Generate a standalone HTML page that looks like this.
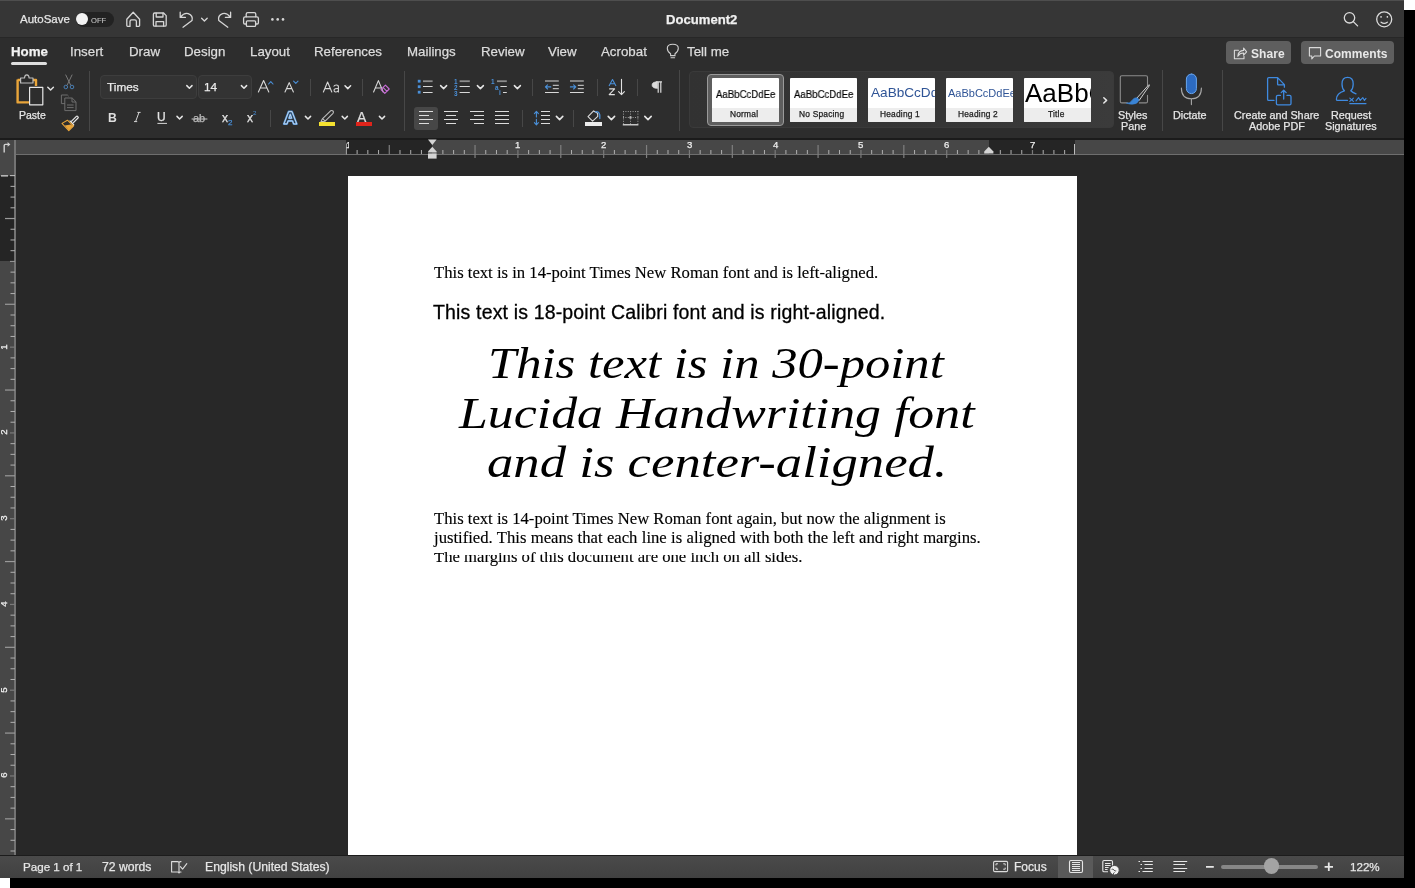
<!DOCTYPE html>
<html><head><meta charset="utf-8">
<style>
*{margin:0;padding:0;box-sizing:border-box}
html,body{width:1415px;height:888px;overflow:hidden;background:#000}
.t{will-change:transform}
body{position:relative;font-family:"Liberation Sans",sans-serif;color:#e3e3e3}
.a{position:absolute}
.t{position:absolute;white-space:pre;line-height:1;-webkit-text-stroke:.25px currentColor}
#page .t{-webkit-text-stroke:.15px currentColor}
svg{position:absolute;overflow:visible}
</style></head><body>
<!-- corners -->
<div class="a" style="left:1404px;top:0;width:11px;height:10px;background:#fff"></div>
<div class="a" style="left:0;top:878px;width:10px;height:10px;background:#fff"></div>

<!-- title bar -->
<div class="a" id="titlebar" style="left:0;top:0;width:1404px;height:37px;background:#363636;border-top:1px solid #4e4e4e"></div>
<!-- ribbon -->
<div class="a" id="ribbon" style="left:0;top:37px;width:1404px;height:101px;background:#2d2d2d;border-top:1px solid #272727"></div>
<div class="a" style="left:0;top:138px;width:1404px;height:2px;background:#1b1b1b"></div>
<!-- canvas -->
<div class="a" id="canvas" style="left:0;top:140px;width:1404px;height:716px;background:#282828"></div>

<!-- horizontal ruler -->
<div class="a" style="left:15px;top:140px;width:1389px;height:15px;background:#474747"></div>
<div class="a" style="left:346px;top:140px;width:86px;height:15px;background:#252525"></div>
<div class="a" style="left:989px;top:140px;width:86px;height:15px;background:#252525"></div>
<div class="a" style="left:15px;top:154px;width:1389px;height:1.4px;background:#6e6e6e"></div>
<!-- vertical ruler -->
<div class="a" style="left:0;top:140px;width:15px;height:716px;background:#474747"></div>
<div class="a" style="left:0;top:176px;width:15px;height:85px;background:#252525"></div>
<div class="a" style="left:14.2px;top:140px;width:1.5px;height:716px;background:#737373"></div>

<!-- page -->
<div class="a" id="page" style="left:348px;top:176px;width:729px;height:680px;background:#fff;overflow:hidden;color:#000">
<div class="t" style="left:85.6px;top:88.5px;font-family:'Liberation Serif',serif;font-size:16.67px">This text is in 14-point Times New Roman font and is left-aligned.</div>
<div class="t" id="cal" style="left:85px;top:127.1px;font-family:'Liberation Sans',sans-serif;font-size:19.5px;letter-spacing:.16px;-webkit-text-stroke:.3px #000">This text is 18-point Calibri font and is right-aligned.</div>
<div class="t" id="luc1" style="left:140px;top:166.15px;font-family:'Liberation Serif',serif;font-style:italic;font-size:44px;-webkit-text-stroke:0;transform-origin:0 0;transform:scaleX(1.1509)">This text is in 30-point</div>
<div class="t" id="luc2" style="left:111px;top:216.15px;font-family:'Liberation Serif',serif;font-style:italic;font-size:44px;-webkit-text-stroke:0;transform-origin:0 0;transform:scaleX(1.1782)">Lucida Handwriting font</div>
<div class="t" id="luc3" style="left:139px;top:265.15px;font-family:'Liberation Serif',serif;font-style:italic;font-size:44px;-webkit-text-stroke:0;transform-origin:0 0;transform:scaleX(1.1982)">and is center-aligned.</div>
<div class="t" id="p4a" style="left:85.6px;top:335px;font-family:'Liberation Serif',serif;font-size:16.67px">This text is 14-point Times New Roman font again, but now the alignment is</div>
<div class="t" id="p4b" style="left:85.6px;top:354.3px;word-spacing:.17px;font-family:'Liberation Serif',serif;font-size:16.67px">justified. This means that each line is aligned with both the left and right margins.</div>
<div class="a" style="left:80px;top:364px;width:600px;height:15px;overflow:hidden"><div class="t" style="left:5.6px;top:11px;font-family:'Liberation Serif',serif;font-size:16.67px">The margins of this document are one inch on all sides.</div></div>
<div class="a" style="left:80px;top:379px;width:600px;height:20px;overflow:hidden"><div class="t" style="left:5.6px;top:-6px;font-family:'Liberation Serif',serif;font-size:16.67px">The margins of this document are one inch on all sides.</div></div>
</div>

<!-- status bar -->
<div class="a" style="left:0;top:855px;width:1404px;height:1px;background:#1c1c1c"></div>
<div class="a" id="status" style="left:0;top:856px;width:1404px;height:22px;background:linear-gradient(#4a4a4a,#414141)"></div>
<!-- title content -->
<div class="t" style="left:20px;top:14px;font-size:11.5px;color:#e6e6e6">AutoSave</div>
<div class="a" style="left:76px;top:12px;width:38px;height:15px;border-radius:7.5px;background:#222"></div>
<div class="a" style="left:75.9px;top:13.2px;width:11.8px;height:11.8px;border-radius:50%;background:#f2f2f2"></div>
<div class="t" style="left:90.6px;top:17px;font-size:7.6px;color:#c4c4c4;-webkit-text-stroke:.1px currentColor">OFF</div>
<svg style="left:0;top:0" width="300" height="37" fill="none" stroke="#d6d6d6" stroke-width="1.3" stroke-linejoin="round" stroke-linecap="round">
 <path d="M126.8 19.2 L133.2 12.2 L139.6 19.2 V25.6 Q139.6 26.4 138.8 26.4 H136.4 V21.4 Q136.4 19.8 134.8 19.8 H131.6 Q130 19.8 130 21.4 V26.4 H127.6 Q126.8 26.4 126.8 25.6 Z"/>
 <path d="M153.4 14.2 Q153.4 13 154.6 13 H163.6 L166.2 15.6 V25 Q166.2 26.2 165 26.2 H154.6 Q153.4 26.2 153.4 25 Z"/>
 <path d="M156.2 13.2 V17 H163 V13.2"/>
 <path d="M156 26 V21.6 H163.6 V26"/>
 <path d="M180.2 12.2 V17.4 H185.4 M180.6 17 Q184 12.5 188.2 13.6 Q193.4 15.6 192 20.6 L183 27.2"/>
 <path d="M201.6 18.2 L204.4 21 L207.2 18.2"/>
 <path d="M230.6 12.2 V17.4 H225.4 M230.2 17 Q226.8 12.5 222.6 13.6 Q217.4 15.6 218.8 20.6 L227.8 27.2"/>
 <path d="M246.2 16.8 V14.2 Q246.2 12.6 247.8 12.6 H254.2 Q255.8 12.6 255.8 14.2 V16.8"/>
 <path d="M246 24 H244.8 Q243.6 24 243.6 22.8 V18.4 Q243.6 16.8 245.2 16.8 H256.8 Q258.4 16.8 258.4 18.4 V22.8 Q258.4 24 257.2 24 H256"/>
 <rect x="246.4" y="20.8" width="9.2" height="5.6" rx="1"/>
</svg>
<svg style="left:0;top:0" width="300" height="37" fill="#d6d6d6"><circle cx="272.4" cy="19.4" r="1.3"/><circle cx="277.7" cy="19.4" r="1.3"/><circle cx="283" cy="19.4" r="1.3"/></svg>
<div class="t" style="left:665.5px;top:13.4px;font-size:13.1px;font-weight:bold;color:#f0f0f0">Document2</div>
<svg style="left:0;top:0" width="1404" height="37" fill="none" stroke="#dcdcdc" stroke-width="1.3" stroke-linecap="round">
 <circle cx="1349.5" cy="17.8" r="5.2"/><path d="M1353.3 21.6 L1357.6 25.9"/>
 <circle cx="1384.2" cy="19.3" r="7.5"/><path d="M1381.1 22.2 Q1384.2 24.4 1387.3 22.2"/>
</svg>
<svg style="left:0;top:0" width="1404" height="37" fill="#dcdcdc"><rect x="1380.3" y="16.1" width="1.5" height="1.6" rx=".4"/><rect x="1386.6" y="16.1" width="1.5" height="1.6" rx=".4"/></svg>

<!-- tabs -->
<div class="t" style="left:10.5px;top:44.7px;font-size:13.3px;font-weight:bold;color:#f2f2f2">Home</div>
<div class="a" style="left:10.8px;top:61.5px;width:36.5px;height:3px;border-radius:1.5px;background:#dedede"></div>
<div class="t" style="left:70.3px;top:44.7px;font-size:13.3px;color:#dcdcdc">Insert</div>
<div class="t" style="left:129.3px;top:44.7px;font-size:13.3px;color:#dcdcdc">Draw</div>
<div class="t" style="left:184px;top:44.7px;font-size:13.3px;color:#dcdcdc">Design</div>
<div class="t" style="left:249.5px;top:44.7px;font-size:13.3px;color:#dcdcdc">Layout</div>
<div class="t" style="left:314.3px;top:44.7px;font-size:13.3px;color:#dcdcdc">References</div>
<div class="t" style="left:407.2px;top:44.7px;font-size:13.3px;color:#dcdcdc">Mailings</div>
<div class="t" style="left:481.2px;top:44.7px;font-size:13.3px;color:#dcdcdc">Review</div>
<div class="t" style="left:547.5px;top:44.7px;font-size:13.3px;color:#dcdcdc">View</div>
<div class="t" style="left:601.2px;top:44.7px;font-size:13.3px;color:#dcdcdc">Acrobat</div>
<svg style="left:0;top:0" width="740" height="70" fill="none" stroke="#cfcfcf" stroke-width="1.1" stroke-linecap="round">
 <path d="M670.6 55.6 V53.8 Q667.3 51.6 667.3 48.2 Q667.3 44.2 672.8 44.2 Q678.3 44.2 678.3 48.2 Q678.3 51.6 675 53.8 V55.6 Z"/><path d="M671 57.8 H674.6"/>
</svg>
<div class="t" style="left:686.8px;top:44.7px;font-size:13.3px;color:#dcdcdc">Tell me</div>

<!-- ribbon content -->
<!-- share/comments -->
<div class="a" style="left:1226px;top:41px;width:64.5px;height:23.3px;border-radius:4px;background:#5e5e5e"></div>
<div class="a" style="left:1300.5px;top:41px;width:93.5px;height:23.3px;border-radius:4px;background:#5e5e5e"></div>
<svg style="left:0;top:0" width="1404" height="70" fill="none" stroke="#dadada" stroke-width="1.1" stroke-linejoin="round" stroke-linecap="round">
 <path d="M1238.5 50.2 H1234.4 V58.8 H1244 V56.4"/>
 <path d="M1237.8 56.2 Q1238.4 50.6 1243.6 50.4 V48 L1246.6 51.8 L1243.6 55.2 V53 Q1240 52.8 1237.8 56.2 Z"/>
 <path d="M1309.4 47.6 H1320.6 V56 H1314.4 L1311.8 58.8 V56 H1309.4 Z"/>
</svg>
<div class="t" style="left:1250.8px;top:48.1px;font-size:12px;font-weight:bold;color:#e8e8e8;-webkit-text-stroke:0;letter-spacing:.1px">Share</div>
<div class="t" style="left:1325.3px;top:48.1px;font-size:12px;font-weight:bold;color:#e8e8e8;-webkit-text-stroke:0;letter-spacing:.05px">Comments</div>

<!-- paste group -->
<svg style="left:0;top:0" width="100" height="140" fill="none" stroke-linejoin="round">
 <path d="M17.6 80 H22 M31 80 H36 V86" stroke="#e9a53a" stroke-width="2.4"/>
 <path d="M17.6 79.5 V102.4 H29" stroke="#e9a53a" stroke-width="2.4"/>
 <path d="M20.6 83 V78 H24.5 Q24.6 74.8 26.8 74.8 Q29 74.8 29.1 78 H33 V83 Z" stroke="#bdbdbd" stroke-width="1.2" fill="#2b2b2b"/>
 <rect x="29.6" y="87.4" width="13.2" height="17.4" stroke="#e6e6e6" stroke-width="1.2"/>
 <path d="M47.8 87.2 L50.6 90 L53.4 87.2" stroke="#e0e0e0" stroke-width="1.5" stroke-linecap="round" stroke-linejoin="round"/>
 <!-- scissors -->
 <path d="M65.6 74.6 L70.8 85.4 M72.2 74.6 L67 85.4" stroke="#7a7a7a" stroke-width="1"/>
 <circle cx="65.8" cy="87" r="1.8" stroke="#4a7fb4" stroke-width="1"/><circle cx="72" cy="87" r="1.8" stroke="#4a7fb4" stroke-width="1"/>
 <!-- copy -->
 <path d="M65 103.6 H61.4 V95 H67.4 L68.6 96.2" stroke="#6e6e6e" stroke-width="1"/>
 <path d="M64.8 98 H72.2 L76 101.8 V110.6 H64.8 Z M72 98 V102 H76 M67 105 H73.6 M67 107.6 H73.6" stroke="#6e6e6e" stroke-width="1"/>
 <!-- format painter -->
 <path d="M70.6 122.2 L76.4 116.4 Q77 115.8 77.6 116.4 L78 116.8 Q78.6 117.4 78 118 L72.2 123.8" stroke="#e6e6e6" stroke-width="1.2"/>
 <path d="M69.6 120.6 L73.8 124.8 L71.6 127" stroke="#e6e6e6" stroke-width="1.2"/>
 <path d="M62 123.4 L67.4 120.2 L73.4 126 L68.8 130.6 Z" stroke="#e9a53a" stroke-width="1.1" fill="none"/>
 <path d="M64.8 125.6 L70.8 124.6 L73 126.2 L68.8 130.4 Z" fill="#e9a53a" stroke="none"/>
</svg>
<div class="t" style="left:19.3px;top:109.9px;font-size:10.5px;color:#e6e6e6">Paste</div>
<div class="a" style="left:89px;top:71px;width:1px;height:60px;background:#474747"></div>

<!-- font group -->
<div class="a" style="left:100px;top:75px;width:96.5px;height:24px;border-radius:4px;background:#333;border:1px solid #3d3d3d"></div>
<div class="a" style="left:198px;top:75px;width:54px;height:24px;border-radius:4px;background:#333;border:1px solid #3d3d3d"></div>
<div class="t" style="left:107px;top:81.7px;font-size:11.8px;color:#eaeaea">Times</div>
<div class="t" style="left:204.3px;top:81.7px;font-size:11.8px;color:#eaeaea">14</div>
<svg style="left:0;top:0" width="420" height="140" fill="none" stroke="#d8d8d8" stroke-width="1.2" stroke-linecap="round" stroke-linejoin="round">
 <path d="M186.8 85.6 L189.4 88.2 L192 85.6" stroke="#e6e6e6" stroke-width="1.5"/>
 <path d="M241.4 85.6 L244 88.2 L246.6 85.6" stroke="#e6e6e6" stroke-width="1.5"/>
 <!-- grow A -->
 <path d="M258.4 92 L263.6 80.6 L268.8 92 M260.4 88 H266.8" stroke-width="1.1"/>
 <path d="M268.6 84 L270.8 81.6 L273 84" stroke="#4a90d9" stroke-width="1.1"/>
 <path d="M285 92 L289.2 82.6 L293.4 92 M286.6 88.6 H291.8" stroke-width="1.1"/>
 <path d="M293.6 81.2 L295.8 83.4 L298 81.2" stroke="#4a90d9" stroke-width="1.1"/>
 <!-- Aa -->
 <path d="M323.4 92 L327.6 82 L331.8 92 M324.8 88.6 H330.4" stroke-width="1.1"/>
 <path d="M338.4 86.8 Q338.4 85 336.2 85 Q334.4 85 334 86.2 M338.4 86.4 V92 M338.4 88.6 Q335.6 88.2 334.2 89.4 Q333.6 91.8 335.8 92 Q337.8 92 338.4 90.4" stroke-width="1.1"/>
 <path d="M345 85.8 L347.8 88.6 L350.6 85.8" stroke="#e6e6e6" stroke-width="1.5"/>
 <!-- clear format -->
 <path d="M373.6 92 L378.4 80.6 L383.2 92 M375.4 88 H381.4" stroke-width="1.1"/>
 <path d="M381 89.6 L385.4 85.2 L389.2 89 L384.8 93.4 Z M383 87.4 L387 91.4" stroke="#c86dd7" stroke-width="1.1"/>
 <!-- row 2 -->
 <path d="M177 116.4 L179.6 119 L182.2 116.4" stroke="#e6e6e6" stroke-width="1.5"/>
 <path d="M305.4 116.4 L308 119 L310.6 116.4" stroke="#e6e6e6" stroke-width="1.5"/>
 <path d="M342.2 116.4 L344.8 119 L347.4 116.4" stroke="#e6e6e6" stroke-width="1.5"/>
 <path d="M379.4 116.4 L382 119 L384.6 116.4" stroke="#e6e6e6" stroke-width="1.5"/>
 <!-- strike ab -->
 <path d="M192 119 H207" stroke-width="1" stroke="#c8c8c8"/>
 <!-- underline -->
 <path d="M157.8 123.4 H166.6" stroke-width="1"/>
 <!-- highlighter -->
 <path d="M322.6 118.6 L330.6 110.8 Q332 110 333 111 Q334 112 333 113.4 L325.2 121.2 Z M321 121.6 L322.6 118.6 L325.2 121.2 Z" stroke="#bdbdbd" stroke-width="1.1"/>
</svg>
<div class="a" style="left:310px;top:79px;width:1px;height:17px;background:#474747"></div>
<div class="a" style="left:361.5px;top:79px;width:1px;height:17px;background:#474747"></div>
<div class="a" style="left:270px;top:110px;width:1px;height:17px;background:#474747"></div>
<div class="t" style="left:108.2px;top:111.6px;font-size:12.2px;font-weight:bold;color:#dedede;-webkit-text-stroke:0">B</div>
<svg style="left:0;top:0" width="300" height="140" fill="none" stroke="#d6d6d6" stroke-width="1"><path d="M137.4 112.4 H140.6 M134 121.6 H137.2 M139 112.4 L135.6 121.6"/></svg>
<div class="t" style="left:157.4px;top:111.1px;font-size:12px;color:#e3e3e3">U</div>
<div class="t" style="left:193.3px;top:112.6px;font-size:11px;color:#bbb">ab</div>
<div class="t" style="left:221.5px;top:112.2px;font-size:12px;color:#e3e3e3">x</div>
<div class="t" style="left:228.3px;top:118.6px;font-size:8px;color:#4a90d9">2</div>
<div class="t" style="left:246.5px;top:112.2px;font-size:12px;color:#e3e3e3">x</div>
<div class="t" style="left:253.4px;top:109.8px;font-size:6.2px;color:#4a90d9;-webkit-text-stroke:0">2</div>
<svg style="left:0;top:0" width="300" height="140" fill="none" stroke-linejoin="round"><path d="M283.8 124 L288.6 111.6 H292 L296.8 124 H293.6 L292.5 120.9 H288.1 L287 124 Z M289 118.2 H291.6 L290.3 114.4 Z" stroke="#4a90d9" stroke-width="2"/><path d="M283.8 124 L288.6 111.6 H292 L296.8 124 H293.6 L292.5 120.9 H288.1 L287 124 Z M289 118.2 H291.6 L290.3 114.4 Z" stroke="#eeeeee" stroke-width=".7"/></svg>
<div class="a" style="left:319px;top:121.6px;width:16.4px;height:4.3px;background:#f4e130"></div>
<div class="t" style="left:357.4px;top:109.6px;font-size:14px;color:#dcdcdc">A</div>
<div class="a" style="left:356.4px;top:121.6px;width:15.6px;height:4.3px;background:#e0241b"></div>
<div class="a" style="left:404px;top:71px;width:1px;height:60px;background:#474747"></div>
<!-- paragraph group -->
<svg style="left:0;top:0" width="690" height="140" fill="none" stroke="#d8d8d8" stroke-width="1" stroke-linecap="butt" stroke-linejoin="round">
 <!-- bullets -->
 <rect x="417.8" y="79.8" width="2.8" height="2.8" fill="#4a90d9" stroke="none"/>
 <rect x="417.8" y="85.3" width="2.8" height="2.8" fill="#4a90d9" stroke="none"/>
 <rect x="417.8" y="90.8" width="2.8" height="2.8" fill="#4a90d9" stroke="none"/>
 <path d="M423 81.2 H432.6" stroke="#8c8c8c" stroke-width="1.8"/><path d="M423 86.5 H432.6"/><path d="M423 92.5 H432.6"/>
 <path d="M440.6 85.6 L443.6 88.6 L446.6 85.6" stroke="#e6e6e6" stroke-width="1.5" stroke-linecap="round"/>
 <!-- numbering -->
 <path d="M459.6 81.2 H469.8" stroke="#8c8c8c" stroke-width="1.8"/><path d="M459.6 86.5 H469.8"/><path d="M459.6 92.5 H469.8"/>
 <path d="M477.4 85.6 L480.4 88.6 L483.4 85.6" stroke="#e6e6e6" stroke-width="1.5" stroke-linecap="round"/>
 <!-- multilevel -->
 <path d="M497 81.2 H506.8" stroke="#8c8c8c" stroke-width="1.8"/><path d="M500.4 86.5 H506.8"/><path d="M503 92.5 H506.8"/>
 <path d="M514.4 85.6 L517.4 88.6 L520.4 85.6" stroke="#e6e6e6" stroke-width="1.5" stroke-linecap="round"/>
 <!-- decrease indent -->
 <path d="M545 81 H558.8" stroke="#8c8c8c" stroke-width="1.8"/><path d="M552.8 85.3 H558.8 M552.8 88.7 H558.8"/><path d="M545 92.5 H558.8"/>
 <path d="M550.8 86.9 H545.6 M547.6 84.8 L545.4 86.9 L547.6 89" stroke="#4a90d9" stroke-width="1.1" stroke-linecap="round"/>
 <!-- increase indent -->
 <path d="M570 81 H583.8" stroke="#8c8c8c" stroke-width="1.8"/><path d="M577.8 85.3 H583.8 M577.8 88.7 H583.8"/><path d="M570 92.5 H583.8"/>
 <path d="M570.4 86.9 H575.6 M573.6 84.8 L575.8 86.9 L573.6 89" stroke="#4a90d9" stroke-width="1.1" stroke-linecap="round"/>
 <!-- sort -->
 <path d="M621.5 79.2 V94.6 M618.6 91.6 L621.5 94.6 L624.4 91.6" stroke="#e0e0e0" stroke-width="1.1" stroke-linecap="round" stroke-linejoin="round"/>
 <path d="M609 86 L612.5 79.6 L616 86 M610.2 83.8 H614.8" stroke="#4a90d9" stroke-width="1.1"/>
 <path d="M609.2 88.9 H614.6 L609.2 94.6 H614.8" stroke="#e0e0e0" stroke-width="1.1"/>
 <!-- pilcrow -->
 <path d="M658.2 81.8 V92.8 M660.8 81.8 V92.8 M655.8 81.8 H662" stroke="#dcdcdc" stroke-width="1.2"/>
 <path d="M657.6 81.8 Q652 81.8 652 85 Q652 88.4 657.6 88.4 Z" fill="#dcdcdc" stroke="#dcdcdc" stroke-width=".6"/>
 <!-- row2 aligns -->
</svg>
<div class="t" style="left:454.2px;top:78.8px;font-size:6.4px;font-weight:bold;color:#4a90d9;line-height:5.9px;-webkit-text-stroke:0">1<br>2<br>3</div>
<div class="t" style="left:491.2px;top:78.8px;font-size:6.4px;font-weight:bold;color:#4a90d9;line-height:5.9px;-webkit-text-stroke:0">1</div><div class="t" style="left:494.8px;top:84.7px;font-size:6.4px;font-weight:bold;color:#4a90d9;-webkit-text-stroke:0">a</div><div class="t" style="left:498.6px;top:90.4px;font-size:6.4px;font-weight:bold;color:#4a90d9;-webkit-text-stroke:0">i</div>
<div class="a" style="left:531.5px;top:79px;width:1px;height:17px;background:#474747"></div>
<div class="a" style="left:596.5px;top:79px;width:1px;height:17px;background:#474747"></div>
<div class="a" style="left:637px;top:79px;width:1px;height:17px;background:#474747"></div>
<div class="a" style="left:414px;top:107px;width:23.5px;height:22.5px;border-radius:3px;background:#474747"></div>
<svg style="left:0;top:0" width="690" height="140" fill="none" stroke="#dcdcdc" stroke-width="1" stroke-linecap="butt">
 <path d="M419 111.5 H433 M419 115.5 H429 M419 119.5 H433 M419 123.5 H429"/>
 <path d="M444 111.5 H458 M446 115.5 H456 M444 119.5 H458 M446 123.5 H456"/>
 <path d="M470 111.5 H484 M474 115.5 H484 M470 119.5 H484 M474 123.5 H484"/>
 <path d="M495 111.5 H509 M495 115.5 H509 M495 119.5 H509 M495 123.5 H509"/>
 <!-- line spacing -->
 <path d="M541 111.5 H550 M541 115.5 H550 M541 119.5 H550 M541 123.5 H550"/>
 <path d="M536.4 111.6 V117 M534.4 113.6 L536.4 111.4 L538.4 113.6 M536.4 119.2 V124.8 M534.4 122.6 L536.4 124.8 L538.4 122.6" stroke="#4a90d9" stroke-width="1.1" stroke-linecap="round" stroke-linejoin="round"/>
 <path d="M556.4 116.4 L559.6 119.6 L562.8 116.4" stroke="#e6e6e6" stroke-width="1.6" stroke-linecap="round" stroke-linejoin="round"/>
 <!-- shading -->
 <path d="M588 116.6 L593.6 110.9 L597.6 113.2 L597.8 116.4 L592.6 121.2 Z" stroke="#dcdcdc" stroke-width="1.1" stroke-linejoin="round"/>
 <path d="M595.4 112 Q598.6 110.6 599.8 115 V118.6" stroke="#4a90d9" stroke-width="1.3" stroke-linecap="round"/>
 <path d="M608.2 116.4 L611.4 119.6 L614.6 116.4" stroke="#e6e6e6" stroke-width="1.6" stroke-linecap="round" stroke-linejoin="round"/>
 <!-- borders -->
 <path d="M623 111.5 H638.4 M623 117.5 H638.4 M623.5 111.2 V124.6 M630.5 111.2 V124.6 M637.9 111.2 V124.6" stroke="#9a9a9a" stroke-width="1" stroke-dasharray="1 1.4"/>
 <rect x="629.4" y="116.4" width="2.2" height="2.2" fill="#bdbdbd" stroke="none"/>
 <path d="M622.8 124.8 H638.4" stroke="#ececec" stroke-width="1.2"/>
 <path d="M644.8 116.4 L648 119.6 L651.2 116.4" stroke="#e6e6e6" stroke-width="1.6" stroke-linecap="round" stroke-linejoin="round"/>
</svg>
<div class="a" style="left:585px;top:122px;width:17.2px;height:4.2px;background:#ececec"></div>
<div class="a" style="left:521.5px;top:110px;width:1px;height:17px;background:#474747"></div>
<div class="a" style="left:573px;top:110px;width:1px;height:17px;background:#474747"></div>
<div class="a" style="left:679px;top:70px;width:1px;height:61px;background:#474747"></div>

<!-- styles gallery -->
<div class="a" style="left:689.4px;top:71.2px;width:424.4px;height:56.8px;border-radius:4px;background:linear-gradient(90deg,#323232,#363636 60%,#3b3b3b);border:1px solid #3a3a3a"></div>
<div class="a" style="left:707px;top:73.5px;width:77.2px;height:52.2px;border-radius:4px;background:#5e5e5e;border:1px solid #9a9a9a"></div>
<div class="a" style="left:711.7px;top:78.2px;width:67.7px;height:43.6px;background:#fff;border-radius:1px;overflow:hidden">
 <div class="a" style="left:0;top:29.6px;width:100%;height:14px;background:#ededed"></div>
 <div class="t" style="left:4px;top:10.4px;font-size:11px;color:#000;-webkit-text-stroke:.2px #000;transform-origin:0 0;transform:scaleX(.875)">AaBbCcDdEe</div>
 <div class="t" style="left:18.6px;top:31.6px;font-size:8.4px;color:#1a1a1a;letter-spacing:.2px">Normal</div>
</div>
<div class="a" style="left:790px;top:78.2px;width:67.3px;height:43.6px;background:#fff;border-radius:1px;overflow:hidden">
 <div class="a" style="left:0;top:29.6px;width:100%;height:14px;background:#ededed"></div>
 <div class="t" style="left:4px;top:10.4px;font-size:11px;color:#000;-webkit-text-stroke:.2px #000;transform-origin:0 0;transform:scaleX(.875)">AaBbCcDdEe</div>
 <div class="t" style="left:9.2px;top:31.6px;font-size:8.4px;color:#1a1a1a;letter-spacing:.2px">No Spacing</div>
</div>
<div class="a" style="left:867.8px;top:78.2px;width:67.5px;height:43.6px;background:#fff;border-radius:1px;overflow:hidden">
 <div class="a" style="left:0;top:29.6px;width:100%;height:14px;background:#ededed"></div>
 <div class="t" style="left:3px;top:7.6px;font-size:13.6px;color:#2f5496;-webkit-text-stroke:0">AaBbCcDd</div>
 <div class="t" style="left:12.6px;top:31.6px;font-size:8.4px;color:#1a1a1a;letter-spacing:.2px">Heading 1</div>
</div>
<div class="a" style="left:945.8px;top:78.2px;width:67.2px;height:43.6px;background:#fff;border-radius:1px;overflow:hidden">
 <div class="a" style="left:0;top:29.6px;width:100%;height:14px;background:#ededed"></div>
 <div class="t" style="left:2.6px;top:9.8px;font-size:11px;color:#2f5496;-webkit-text-stroke:0">AaBbCcDdEe</div>
 <div class="t" style="left:12.6px;top:31.6px;font-size:8.4px;color:#1a1a1a;letter-spacing:.2px">Heading 2</div>
</div>
<div class="a" style="left:1024px;top:78.2px;width:67px;height:43.6px;background:#fff;border-radius:1px;overflow:hidden">
 <div class="a" style="left:0;top:29.6px;width:100%;height:14px;background:#ededed"></div>
 <div class="t" style="left:1.4px;top:1.4px;font-size:26px;color:#000;-webkit-text-stroke:0">AaBbC</div>
 <div class="t" style="left:24.4px;top:31.6px;font-size:8.4px;color:#1a1a1a;letter-spacing:.2px">Title</div>
</div>
<svg style="left:0;top:0" width="1404" height="140" fill="none" stroke="#d8d8d8" stroke-width="1.2" stroke-linecap="round" stroke-linejoin="round">
 <path d="M1103.8 97.8 L1106.6 100.4 L1103.8 103" stroke="#e6e6e6" stroke-width="1.5"/>
 <!-- styles pane -->
 <path d="M1127.4 102.9 H1121.8 Q1120.3 102.9 1120.3 101.4 V77.2 Q1120.3 75.7 1121.8 75.7 H1146 Q1147.5 75.7 1147.5 77.2 V85.6 M1147.5 95.4 V101.4 Q1147.5 102.9 1146 102.9 H1139.4" stroke="#8c8c8c" stroke-width="1.1"/>
 <path d="M1136.6 98.4 L1148.6 85 Q1149.6 84.2 1149.4 85.6 L1139.2 100.4 Z" stroke="#d0d0d0" stroke-width="1"/>
 <path d="M1126.8 103.2 Q1130.6 103 1132 100.4 Q1133.8 97.4 1136.6 97.8 Q1139.6 98.6 1138.6 101 Q1136.8 104.4 1131.8 104.2 Q1128.6 104 1126.8 103.2 Z" fill="#3a84d6" stroke="#3a84d6" stroke-width=".6"/>
 <!-- dictate -->
 <rect x="1186.4" y="74" width="10" height="19.6" rx="5" fill="#2c6bc2" stroke="#6aa6ee" stroke-width="1"/>
 <path d="M1181.4 88 Q1181.4 98.8 1191.4 98.8 Q1201.4 98.8 1201.4 88 M1191.4 98.8 V104.6" stroke="#a8a8a8" stroke-width="1.1"/>
 <!-- create pdf -->
 <path d="M1274 100.4 H1268.8 Q1267.6 100.4 1267.6 99.2 V78.8 Q1267.6 77.6 1268.8 77.6 H1277.6 L1284.4 84.6 V87.2 M1277.6 77.6 V84.2 Q1277.6 84.8 1278.2 84.8 H1284.4" stroke="#3f8ae0" stroke-width="1.3"/>
 <path d="M1280.4 95.4 H1277.8 Q1276.4 95.4 1276.4 96.8 V103.4 Q1276.4 104.8 1277.8 104.8 H1289.6 Q1291 104.8 1291 103.4 V96.8 Q1291 95.4 1289.6 95.4 H1287 M1283.7 99 V90.2 M1281.2 92.6 L1283.7 90.2 L1286.2 92.6" stroke="#3f8ae0" stroke-width="1.3"/>
 <!-- request signatures -->
 <path d="M1344.4 90.8 Q1342 88.6 1342 84 Q1342 77.4 1347.6 77.4 Q1353.2 77.4 1353.2 84 Q1353.2 88.6 1350.8 90.8 Q1352.4 92.6 1356 93.8 M1344.4 90.8 Q1336.6 93 1336.4 99.2 Q1336.4 100.4 1337.6 100.4 H1347.4" stroke="#3f8ae0" stroke-width="1.3"/>
 <path d="M1349.8 98.2 L1353.4 101.4 M1353.4 98.2 L1349.8 101.4 M1356 100.8 L1358.6 97.6 L1360.2 100.4 L1362.8 97.6 L1364.4 100.4 L1366 98.4" stroke="#3f8ae0" stroke-width="1.1"/>
 <path d="M1349.8 103.6 H1366" stroke="#3f8ae0" stroke-width="1.1"/>
</svg>
<div class="t" style="left:1118.2px;top:109.5px;font-size:10.8px;color:#e6e6e6">Styles</div>
<div class="t" style="left:1121.3px;top:121.3px;font-size:10.8px;color:#e6e6e6">Pane</div>
<div class="a" style="left:1161.5px;top:70px;width:1px;height:61px;background:#474747"></div>
<div class="t" style="left:1172.8px;top:109.5px;font-size:10.8px;color:#e6e6e6">Dictate</div>
<div class="a" style="left:1221.5px;top:70px;width:1px;height:61px;background:#474747"></div>
<div class="t" style="left:1233.6px;top:109.5px;font-size:10.8px;color:#e6e6e6">Create and Share</div>
<div class="t" style="left:1248.6px;top:121.3px;font-size:10.8px;color:#e6e6e6">Adobe PDF</div>
<div class="t" style="left:1330.6px;top:109.5px;font-size:10.8px;color:#e6e6e6">Request</div>
<div class="t" style="left:1324.6px;top:121.3px;font-size:10.8px;color:#e6e6e6">Signatures</div>
<!-- status content -->
<div class="t" style="left:23px;top:860.6px;font-size:11.6px;color:#e6e6e6">Page 1 of 1</div>
<div class="t" style="left:102px;top:860.6px;font-size:12.2px;color:#e6e6e6">72 words</div>
<svg style="left:0;top:850px" width="1404" height="38" fill="none" stroke="#dcdcdc" stroke-width="1.1" stroke-linejoin="round" stroke-linecap="round">
 <path d="M171.6 11.6 V22 H177.6 Q178.6 22 179 23 Q179.4 22 180.4 22 H181 M179 12 V23 M171.6 11.6 H177.6 Q179 11.6 179 12.8 Q179 11.6 180.4 11.6 H181"/>
 <path d="M180.4 16.6 L182.6 19.2 L186.8 13.6"/>
 <!-- focus -->
 <rect x="993.6" y="11.4" width="14" height="10.2" rx="1.2"/>
 <path d="M996 15 V13.8 H997.6 M1003.6 13.8 H1005.2 V15 M1005.2 18 V19.2 H1003.6 M997.6 19.2 H996 V18" stroke-width="1"/>
</svg>
<div class="t" style="left:204.8px;top:860.6px;font-size:12.2px;color:#e6e6e6">English (United States)</div>
<div class="t" style="left:1014.2px;top:860.6px;font-size:12px;color:#e6e6e6">Focus</div>
<div class="a" style="left:1057.8px;top:856px;width:35.7px;height:22px;background:#5a5a5a"></div>
<svg style="left:0;top:850px" width="1404" height="38" fill="none" stroke="#e6e6e6" stroke-width="1.1">
 <rect x="1069.5" y="10.5" width="13" height="12" rx="1.4"/>
 <path d="M1072 12.5 H1080 M1072 14.5 H1080 M1072 16.5 H1080 M1072 18.5 H1080 M1072 20.5 H1080" stroke-width="1"/>
 <path d="M1112.5 16.5 V11.8 Q1112.5 10.5 1111.3 10.5 H1104 Q1102.8 10.5 1102.8 11.8 V20.5 Q1102.8 21.8 1104 21.8 H1108"/>
 <path d="M1105 13.5 H1110.6 M1105 15.5 H1110.6 M1105 17.5 H1108.6 M1105 19.5 H1107.6" stroke-width="1"/>
 <path d="M1138.5 11.5 H1140 M1142.5 11.5 H1152.8 M1140.5 14.5 H1142 M1144.5 14.5 H1152.8 M1140.5 18.5 H1142 M1144.5 18.5 H1152.8 M1138.5 21.5 H1140 M1142.5 21.5 H1152.8" stroke-width="1"/>
 <path d="M1173.4 11.5 H1187.2 M1173.4 14.5 H1185 M1173.4 18.5 H1187.2 M1173.4 21.5 H1185" stroke-width="1"/>
 <path d="M1206 16.8 H1213.8 M1324.6 16.8 H1333 M1328.8 12.6 V21" stroke-width="1.8"/>
</svg>
<svg style="left:0;top:850px" width="1404" height="38"><circle cx="1114.4" cy="20.2" r="4.8" fill="#f0f0f0" stroke="#464646" stroke-width="1"/><path d="M1111.6 19.4 Q1113 18.6 1114 20 Q1115 21.6 1116.2 20.8 M1113.4 24.6 Q1113.2 22.6 1114.6 22.4" stroke="#464646" stroke-width=".9" fill="none"/></svg>
<div class="a" style="left:1220.5px;top:864.8px;width:97.5px;height:4.2px;border-radius:2.1px;background:#878787"></div>
<div class="a" style="left:1263.8px;top:858.4px;width:15.6px;height:15.6px;border-radius:50%;background:#a3a3a3"></div>
<div class="t" style="left:1349.5px;top:860.6px;font-size:11.6px;color:#e6e6e6">122%</div>
<!-- ruler content -->
<svg style="left:0;top:0" width="1404" height="856">
<rect x="345.79" y="150" width="1.2" height="4.5" fill="#7a7a7a"/>
<rect x="356.61" y="150" width="1" height="4" fill="#b0b0b0"/>
<rect x="367.33" y="150" width="1" height="4" fill="#b0b0b0"/>
<rect x="378.05" y="150" width="1" height="4" fill="#b0b0b0"/>
<rect x="388.67" y="145" width="1.2" height="9.5" fill="#7f7f7f"/>
<rect x="399.49" y="150" width="1" height="4" fill="#b0b0b0"/>
<rect x="410.21" y="150" width="1" height="4" fill="#b0b0b0"/>
<rect x="420.93" y="150" width="1" height="4" fill="#b0b0b0"/>
<rect x="442.37" y="150" width="1" height="4" fill="#b0b0b0"/>
<rect x="453.09" y="150" width="1" height="4" fill="#b0b0b0"/>
<rect x="463.81" y="150" width="1" height="4" fill="#b0b0b0"/>
<rect x="474.43" y="145" width="1.2" height="13" fill="#7f7f7f"/>
<rect x="485.25" y="150" width="1" height="4" fill="#b0b0b0"/>
<rect x="495.97" y="150" width="1" height="4" fill="#b0b0b0"/>
<rect x="506.69" y="150" width="1" height="4" fill="#b0b0b0"/>
<rect x="517.31" y="150" width="1.2" height="8" fill="#7a7a7a"/>
<rect x="528.13" y="150" width="1" height="4" fill="#b0b0b0"/>
<rect x="538.85" y="150" width="1" height="4" fill="#b0b0b0"/>
<rect x="549.57" y="150" width="1" height="4" fill="#b0b0b0"/>
<rect x="560.19" y="145" width="1.2" height="13" fill="#7f7f7f"/>
<rect x="571.01" y="150" width="1" height="4" fill="#b0b0b0"/>
<rect x="581.73" y="150" width="1" height="4" fill="#b0b0b0"/>
<rect x="592.45" y="150" width="1" height="4" fill="#b0b0b0"/>
<rect x="603.07" y="150" width="1.2" height="8" fill="#7a7a7a"/>
<rect x="613.89" y="150" width="1" height="4" fill="#b0b0b0"/>
<rect x="624.61" y="150" width="1" height="4" fill="#b0b0b0"/>
<rect x="635.33" y="150" width="1" height="4" fill="#b0b0b0"/>
<rect x="645.95" y="145" width="1.2" height="13" fill="#7f7f7f"/>
<rect x="656.77" y="150" width="1" height="4" fill="#b0b0b0"/>
<rect x="667.49" y="150" width="1" height="4" fill="#b0b0b0"/>
<rect x="678.21" y="150" width="1" height="4" fill="#b0b0b0"/>
<rect x="688.83" y="150" width="1.2" height="8" fill="#7a7a7a"/>
<rect x="699.65" y="150" width="1" height="4" fill="#b0b0b0"/>
<rect x="710.37" y="150" width="1" height="4" fill="#b0b0b0"/>
<rect x="721.09" y="150" width="1" height="4" fill="#b0b0b0"/>
<rect x="731.71" y="145" width="1.2" height="13" fill="#7f7f7f"/>
<rect x="742.53" y="150" width="1" height="4" fill="#b0b0b0"/>
<rect x="753.25" y="150" width="1" height="4" fill="#b0b0b0"/>
<rect x="763.97" y="150" width="1" height="4" fill="#b0b0b0"/>
<rect x="774.59" y="150" width="1.2" height="8" fill="#7a7a7a"/>
<rect x="785.41" y="150" width="1" height="4" fill="#b0b0b0"/>
<rect x="796.13" y="150" width="1" height="4" fill="#b0b0b0"/>
<rect x="806.85" y="150" width="1" height="4" fill="#b0b0b0"/>
<rect x="817.47" y="145" width="1.2" height="13" fill="#7f7f7f"/>
<rect x="828.29" y="150" width="1" height="4" fill="#b0b0b0"/>
<rect x="839.01" y="150" width="1" height="4" fill="#b0b0b0"/>
<rect x="849.73" y="150" width="1" height="4" fill="#b0b0b0"/>
<rect x="860.35" y="150" width="1.2" height="8" fill="#7a7a7a"/>
<rect x="871.17" y="150" width="1" height="4" fill="#b0b0b0"/>
<rect x="881.89" y="150" width="1" height="4" fill="#b0b0b0"/>
<rect x="892.61" y="150" width="1" height="4" fill="#b0b0b0"/>
<rect x="903.23" y="145" width="1.2" height="13" fill="#7f7f7f"/>
<rect x="914.05" y="150" width="1" height="4" fill="#b0b0b0"/>
<rect x="924.77" y="150" width="1" height="4" fill="#b0b0b0"/>
<rect x="935.49" y="150" width="1" height="4" fill="#b0b0b0"/>
<rect x="946.11" y="150" width="1.2" height="8" fill="#7a7a7a"/>
<rect x="956.93" y="150" width="1" height="4" fill="#b0b0b0"/>
<rect x="967.65" y="150" width="1" height="4" fill="#b0b0b0"/>
<rect x="978.37" y="150" width="1" height="4" fill="#b0b0b0"/>
<rect x="999.81" y="150" width="1" height="4" fill="#b0b0b0"/>
<rect x="1010.53" y="150" width="1" height="4" fill="#b0b0b0"/>
<rect x="1021.25" y="150" width="1" height="4" fill="#b0b0b0"/>
<rect x="1031.87" y="150" width="1.2" height="4.5" fill="#7a7a7a"/>
<rect x="1042.69" y="150" width="1" height="4" fill="#b0b0b0"/>
<rect x="1053.41" y="150" width="1" height="4" fill="#b0b0b0"/>
<rect x="1064.13" y="150" width="1" height="4" fill="#b0b0b0"/>
<rect x="1074" y="144" width="1" height="10.5" fill="#bdbdbd"/>
<rect x="346" y="144" width="1" height="10.5" fill="#9a9a9a"/>
<rect x="10" y="175.14" width="5" height="1" fill="#c8c8c8"/>
<rect x="1" y="175.14" width="7" height="1.4" fill="#c8c8c8"/>
<rect x="10.5" y="185.86" width="4.5" height="1" fill="#b0b0b0"/>
<rect x="10.5" y="196.58" width="4.5" height="1" fill="#b0b0b0"/>
<rect x="10.5" y="207.30" width="4.5" height="1" fill="#b0b0b0"/>
<rect x="5" y="217.92" width="10" height="1.2" fill="#9a9a9a"/>
<rect x="10.5" y="228.74" width="4.5" height="1" fill="#b0b0b0"/>
<rect x="10.5" y="239.46" width="4.5" height="1" fill="#b0b0b0"/>
<rect x="10.5" y="250.18" width="4.5" height="1" fill="#b0b0b0"/>
<rect x="10" y="260.90" width="5" height="1" fill="#9a9a9a"/>
<rect x="10.5" y="271.62" width="4.5" height="1" fill="#b0b0b0"/>
<rect x="10.5" y="282.34" width="4.5" height="1" fill="#b0b0b0"/>
<rect x="10.5" y="293.06" width="4.5" height="1" fill="#b0b0b0"/>
<rect x="5" y="303.68" width="10" height="1.2" fill="#9a9a9a"/>
<rect x="10.5" y="314.50" width="4.5" height="1" fill="#b0b0b0"/>
<rect x="10.5" y="325.22" width="4.5" height="1" fill="#b0b0b0"/>
<rect x="10.5" y="335.94" width="4.5" height="1" fill="#b0b0b0"/>
<rect x="10" y="346.56" width="5" height="1.2" fill="#7a7a7a"/>
<rect x="10.5" y="357.38" width="4.5" height="1" fill="#b0b0b0"/>
<rect x="10.5" y="368.10" width="4.5" height="1" fill="#b0b0b0"/>
<rect x="10.5" y="378.82" width="4.5" height="1" fill="#b0b0b0"/>
<rect x="5" y="389.44" width="10" height="1.2" fill="#9a9a9a"/>
<rect x="10.5" y="400.26" width="4.5" height="1" fill="#b0b0b0"/>
<rect x="10.5" y="410.98" width="4.5" height="1" fill="#b0b0b0"/>
<rect x="10.5" y="421.70" width="4.5" height="1" fill="#b0b0b0"/>
<rect x="10" y="432.32" width="5" height="1.2" fill="#7a7a7a"/>
<rect x="10.5" y="443.14" width="4.5" height="1" fill="#b0b0b0"/>
<rect x="10.5" y="453.86" width="4.5" height="1" fill="#b0b0b0"/>
<rect x="10.5" y="464.58" width="4.5" height="1" fill="#b0b0b0"/>
<rect x="5" y="475.20" width="10" height="1.2" fill="#9a9a9a"/>
<rect x="10.5" y="486.02" width="4.5" height="1" fill="#b0b0b0"/>
<rect x="10.5" y="496.74" width="4.5" height="1" fill="#b0b0b0"/>
<rect x="10.5" y="507.46" width="4.5" height="1" fill="#b0b0b0"/>
<rect x="10" y="518.08" width="5" height="1.2" fill="#7a7a7a"/>
<rect x="10.5" y="528.90" width="4.5" height="1" fill="#b0b0b0"/>
<rect x="10.5" y="539.62" width="4.5" height="1" fill="#b0b0b0"/>
<rect x="10.5" y="550.34" width="4.5" height="1" fill="#b0b0b0"/>
<rect x="5" y="560.96" width="10" height="1.2" fill="#9a9a9a"/>
<rect x="10.5" y="571.78" width="4.5" height="1" fill="#b0b0b0"/>
<rect x="10.5" y="582.50" width="4.5" height="1" fill="#b0b0b0"/>
<rect x="10.5" y="593.22" width="4.5" height="1" fill="#b0b0b0"/>
<rect x="10" y="603.84" width="5" height="1.2" fill="#7a7a7a"/>
<rect x="10.5" y="614.66" width="4.5" height="1" fill="#b0b0b0"/>
<rect x="10.5" y="625.38" width="4.5" height="1" fill="#b0b0b0"/>
<rect x="10.5" y="636.10" width="4.5" height="1" fill="#b0b0b0"/>
<rect x="5" y="646.72" width="10" height="1.2" fill="#9a9a9a"/>
<rect x="10.5" y="657.54" width="4.5" height="1" fill="#b0b0b0"/>
<rect x="10.5" y="668.26" width="4.5" height="1" fill="#b0b0b0"/>
<rect x="10.5" y="678.98" width="4.5" height="1" fill="#b0b0b0"/>
<rect x="10" y="689.60" width="5" height="1.2" fill="#7a7a7a"/>
<rect x="10.5" y="700.42" width="4.5" height="1" fill="#b0b0b0"/>
<rect x="10.5" y="711.14" width="4.5" height="1" fill="#b0b0b0"/>
<rect x="10.5" y="721.86" width="4.5" height="1" fill="#b0b0b0"/>
<rect x="5" y="732.48" width="10" height="1.2" fill="#9a9a9a"/>
<rect x="10.5" y="743.30" width="4.5" height="1" fill="#b0b0b0"/>
<rect x="10.5" y="754.02" width="4.5" height="1" fill="#b0b0b0"/>
<rect x="10.5" y="764.74" width="4.5" height="1" fill="#b0b0b0"/>
<rect x="10" y="775.36" width="5" height="1.2" fill="#7a7a7a"/>
<rect x="10.5" y="786.18" width="4.5" height="1" fill="#b0b0b0"/>
<rect x="10.5" y="796.90" width="4.5" height="1" fill="#b0b0b0"/>
<rect x="10.5" y="807.62" width="4.5" height="1" fill="#b0b0b0"/>
<rect x="5" y="818.24" width="10" height="1.2" fill="#9a9a9a"/>
<rect x="10.5" y="829.06" width="4.5" height="1" fill="#b0b0b0"/>
<rect x="10.5" y="839.78" width="4.5" height="1" fill="#b0b0b0"/>
<rect x="10.5" y="850.50" width="4.5" height="1" fill="#b0b0b0"/>
<path d="M428 139.6 H436.6 L432.3 145 Z" fill="#d4d4d4"/>
<path d="M432.3 146.8 L436.6 151.4 V152.6 H428 V151.4 Z" fill="#d4d4d4"/>
<rect x="428" y="153.4" width="8.6" height="5.2" fill="#d4d4d4"/>
<path d="M988.8 146.8 L993.4 151.6 V153.4 H984.2 V151.6 Z" fill="#d4d4d4"/>
<path d="M4.2 152.4 V145.6 Q4.2 144.4 5.4 144.4 H8" stroke="#d0d0d0" stroke-width="1.4" fill="none"/><path d="M7.6 142 L10.4 144.4 L7.6 146.8 Z" fill="#d0d0d0"/>
</svg>
<div class="t" style="left:515.31px;top:140.4px;font-size:9.6px;color:#eeeeee">1</div>
<div class="t" style="left:601.07px;top:140.4px;font-size:9.6px;color:#eeeeee">2</div>
<div class="t" style="left:686.83px;top:140.4px;font-size:9.6px;color:#eeeeee">3</div>
<div class="t" style="left:772.59px;top:140.4px;font-size:9.6px;color:#eeeeee">4</div>
<div class="t" style="left:858.35px;top:140.4px;font-size:9.6px;color:#eeeeee">5</div>
<div class="t" style="left:944.11px;top:140.4px;font-size:9.6px;color:#eeeeee">6</div>
<div class="t" style="left:1029.87px;top:140.4px;font-size:9.6px;color:#eeeeee">7</div>
<div class="t" style="left:345.6px;top:140.4px;font-size:9.6px;color:#eeeeee;width:3px;overflow:hidden">1</div>
<div class="t" style="left:0.2px;top:341.66px;font-size:9.6px;color:#eeeeee;transform:rotate(-90deg);transform-origin:50% 50%;width:8px;text-align:center;height:10px">1</div>
<div class="t" style="left:0.2px;top:427.42px;font-size:9.6px;color:#eeeeee;transform:rotate(-90deg);transform-origin:50% 50%;width:8px;text-align:center;height:10px">2</div>
<div class="t" style="left:0.2px;top:513.18px;font-size:9.6px;color:#eeeeee;transform:rotate(-90deg);transform-origin:50% 50%;width:8px;text-align:center;height:10px">3</div>
<div class="t" style="left:0.2px;top:598.94px;font-size:9.6px;color:#eeeeee;transform:rotate(-90deg);transform-origin:50% 50%;width:8px;text-align:center;height:10px">4</div>
<div class="t" style="left:0.2px;top:684.70px;font-size:9.6px;color:#eeeeee;transform:rotate(-90deg);transform-origin:50% 50%;width:8px;text-align:center;height:10px">5</div>
<div class="t" style="left:0.2px;top:770.46px;font-size:9.6px;color:#eeeeee;transform:rotate(-90deg);transform-origin:50% 50%;width:8px;text-align:center;height:10px">6</div>
</body></html>
